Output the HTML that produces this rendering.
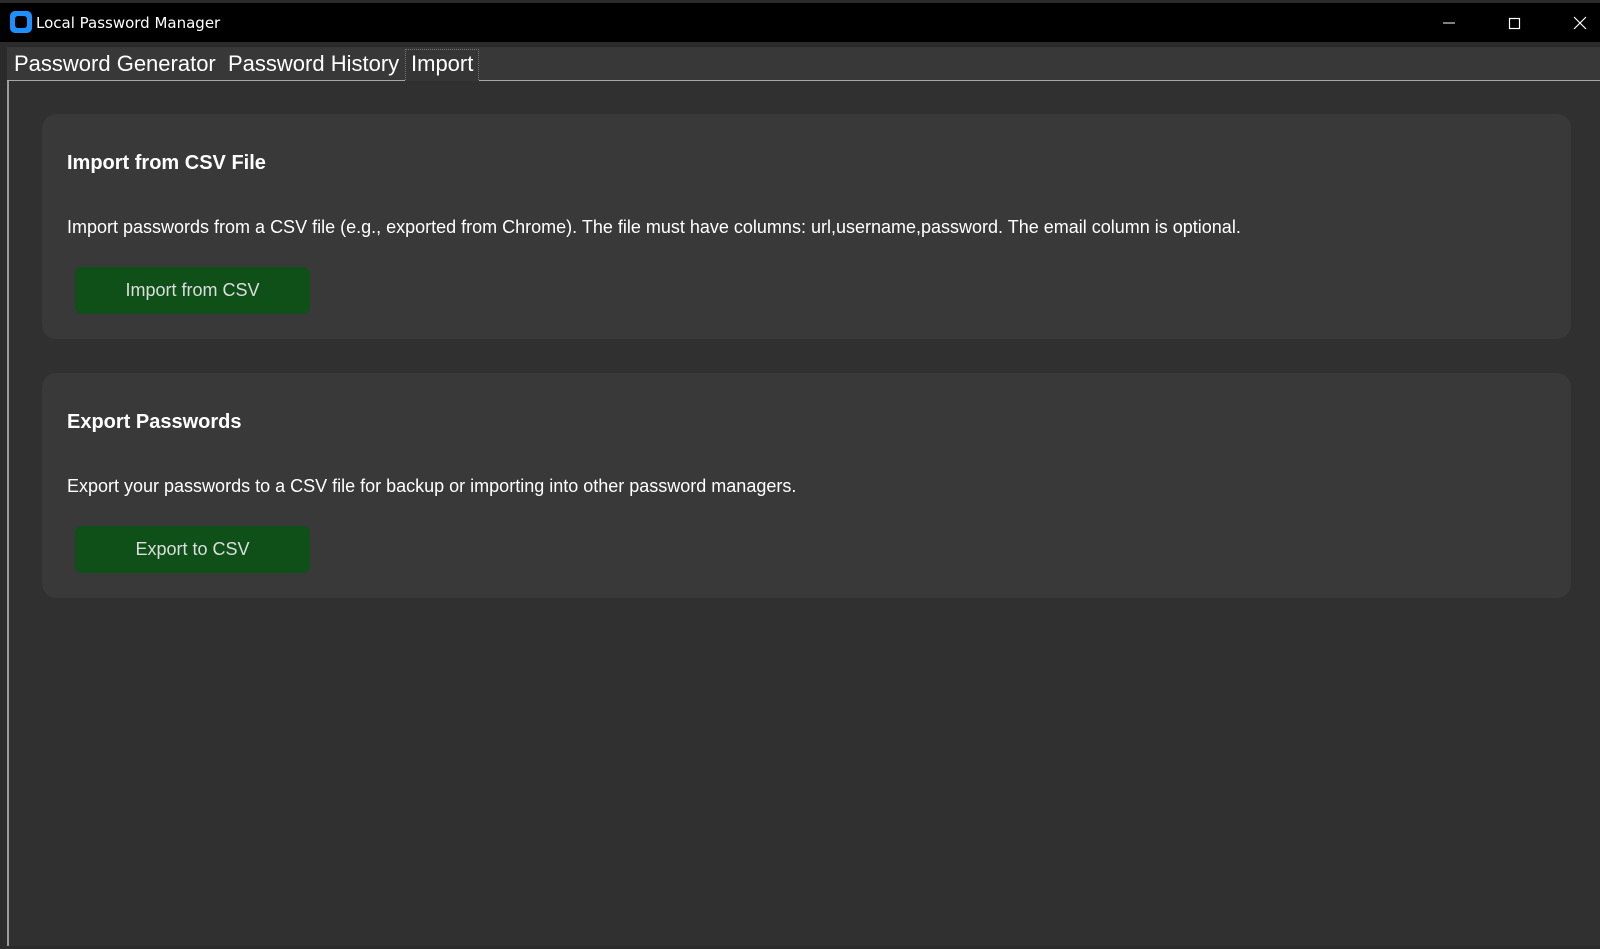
<!DOCTYPE html>
<html><head><style>
*{margin:0;padding:0;box-sizing:border-box}
body{width:1600px;height:949px;background:#2b2b2b;font-family:"Liberation Sans",sans-serif;position:relative;overflow:hidden}
.tb{position:absolute;left:0;top:3px;width:1600px;height:39px;background:#000}
.tb .t{position:absolute;left:36px;top:11px;color:#fff;font-family:"DejaVu Sans","Liberation Sans",sans-serif;font-size:15px}
.ic{position:absolute;left:10px;top:8px;width:22px;height:22px;background:#1e8fff;border-radius:5px}
.ic:after{content:"";position:absolute;left:5px;top:5px;width:12px;height:12px;background:#000;border-radius:3px}
.tabs{position:absolute;left:7px;top:47px;width:1593px;height:34px;background:#383838;border-bottom:1px solid #a8a8a8}
.tab{position:absolute;top:4px;color:#fff;font-size:22px}
.sel{position:absolute;left:398px;top:2px;width:74px;height:33px;background:#353535;border:1px dotted #777;border-bottom:none}
.main{position:absolute;left:7px;top:81px;width:1593px;height:865px;background:#303030;border-left:2px solid #9a9a9a}
.card{position:absolute;left:42px;width:1529px;height:225px;background:#393939;border-radius:14px}
.card h2{position:absolute;left:25px;top:38px;color:#fff;font-size:20px;font-weight:bold}
.card p{position:absolute;left:25px;top:103px;color:#fff;font-size:18px}
.btn{position:absolute;left:33px;top:153px;width:235px;height:47px;background:#0e5018;border-radius:7px;color:#ddd;font-size:18px;text-align:center;line-height:47px}
</style></head><body>
<div class="tb"><div class="ic"></div><div class="t">Local Password Manager</div>
<svg style="position:absolute;left:1440px;top:10px" width="150" height="20"><line x1="3" y1="10" x2="15" y2="10" stroke="#fff"/><rect x="69.5" y="5.5" width="10" height="10" fill="none" stroke="#fff" stroke-width="1.2"/><path d="M134 4L146 16M146 4L134 16" stroke="#fff" stroke-width="1.2"/></svg></div>
<div class="tabs"><div class="sel"></div>
<div class="tab" style="left:7px">Password Generator</div>
<div class="tab" style="left:221px">Password History</div>
<div class="tab" style="left:404px">Import</div></div>
<div class="main"></div>
<div class="card" style="top:114px"><h2>Import from CSV File</h2><p>Import passwords from a CSV file (e.g., exported from Chrome). The file must have columns: url,username,password. The email column is optional.</p><div class="btn">Import from CSV</div></div>
<div class="card" style="top:373px"><h2>Export Passwords</h2><p>Export your passwords to a CSV file for backup or importing into other password managers.</p><div class="btn">Export to CSV</div></div>
</body></html>
